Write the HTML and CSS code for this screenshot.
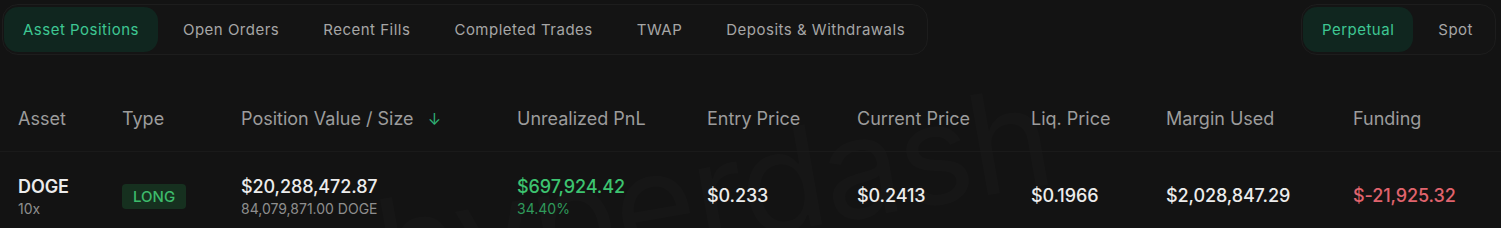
FILE: index.html
```html
<!DOCTYPE html>
<html>
<head>
<meta charset="utf-8">
<link rel="stylesheet" href="styles.css">
</head>
<body>
<div class="page">
  <div class="watermark">hyperdash</div>
  <div class="topbar">
    <div class="tabs">
      <div class="tab active">Asset Positions</div>
      <div class="tab">Open Orders</div>
      <div class="tab">Recent Fills</div>
      <div class="tab">Completed Trades</div>
      <div class="tab">TWAP</div>
      <div class="tab">Deposits &amp; Withdrawals</div>
    </div>
    <div class="tabs">
      <div class="tab active">Perpetual</div>
      <div class="tab">Spot</div>
    </div>
  </div>
  <div class="table">
    <div class="row head">
      <div class="cell">Asset</div>
      <div class="cell">Type</div>
      <div class="cell">Position Value / Size <span class="sort">↓</span></div>
      <div class="cell">Unrealized PnL</div>
      <div class="cell">Entry Price</div>
      <div class="cell">Current Price</div>
      <div class="cell">Liq. Price</div>
      <div class="cell">Margin Used</div>
      <div class="cell">Funding</div>
    </div>
    <div class="row data">
      <div class="cell stack"><span class="main strong">DOGE</span><span class="sub">10x</span></div>
      <div class="cell"><span class="badge">LONG</span></div>
      <div class="cell stack"><span class="main">$20,288,472.87</span><span class="sub">84,079,871.00 DOGE</span></div>
      <div class="cell stack"><span class="main green">$697,924.42</span><span class="sub green-dim">34.40%</span></div>
      <div class="cell value">$0.233</div>
      <div class="cell value">$0.2413</div>
      <div class="cell value">$0.1966</div>
      <div class="cell value">$2,028,847.29</div>
      <div class="cell value red">$-21,925.32</div>
    </div>
  </div>
</div>
</body>
</html>
```
FILE: styles.css
```css
html, body {
  margin: 0;
  padding: 0;
  background: #131313;
}
body {
  font-family: Inter, "Liberation Sans", Arial, sans-serif;
  color: #e6e6e6;
  width: 1501px;
  height: 228px;
  overflow: hidden;
}
.page {
  position: relative;
  height: 228px;
  overflow: hidden;
}
.watermark {
  position: absolute;
  left: 390px;
  top: 183px;
  font-size: 140px;
  line-height: 135px;
  font-weight: 400;
  letter-spacing: -2px;
  color: rgba(255, 255, 255, 0.016);
  transform: rotate(-10deg);
  transform-origin: 0 100%;
  pointer-events: none;
  white-space: nowrap;
}
.topbar {
  position: relative;
  display: flex;
  justify-content: space-between;
  padding: 4px 5px 0 2px;
}
.tabs {
  display: flex;
  gap: 6px;
  padding: 2px 3px 2px 1px;
  border: 1px solid #1d1d1d;
  border-radius: 16px;
  background: #141414;
}
.tab {
  height: 45px;
  display: flex;
  align-items: center;
  padding: 0 19px;
  font-size: 15px;
  color: #a6a6a6;
  border-radius: 14px;
  letter-spacing: 0.5px;
}
.tab.active {
  background: #10261f;
  color: #3ec793;
}
.table {
  position: relative;
  margin-top: 30px;
}
.row {
  display: grid;
  grid-template-columns: 104px 119px 276px 190px 150px 174px 135px 187px 1fr;
  padding-left: 18px;
  align-items: center;
}
.row.head {
  height: 66px;
  border-bottom: 1px solid #1a1a1a;
  color: #9c9c9c;
  font-size: 18px;
  letter-spacing: 0;
}
.sort {
  color: #2fae72;
  margin-left: 9px;
  font-size: 16px;
}
.row.data {
  height: 86px;
}
.cell {
  white-space: nowrap;
}
.stack {
  display: flex;
  flex-direction: column;
  gap: 3px;
  padding-top: 2px;
}
.main {
  font-size: 18px;
  font-weight: 500;
  color: #ececec;
  letter-spacing: -0.1px;
}
.main.strong {
  font-weight: 600;
}
.sub {
  font-size: 14px;
  color: #8e8e8e;
  letter-spacing: 0;
}
.value {
  font-size: 18px;
  font-weight: 500;
  color: #ececec;
  letter-spacing: -0.1px;
  padding-top: 0;
}
.green {
  color: #3dc470;
}
.green-dim {
  color: #2f9a5b;
}
.red {
  color: #e0636d;
}
.badge {
  display: inline-flex;
  align-items: center;
  height: 25px;
  padding: 0 11px;
  margin-top: 3px;
  background: #16301f;
  color: #3dbb6b;
  font-size: 15px;
  font-weight: 500;
  border-radius: 4px;
}
```
